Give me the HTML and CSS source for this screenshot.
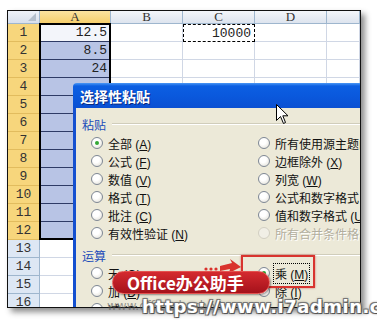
FILE: index.html
```html
<!DOCTYPE html>
<html>
<head>
    <title>选择性粘贴</title>
    <meta charset="utf-8" />
    <link rel="stylesheet" href="styles.css">
</head>
<body>
    <div class="page">
        <div class="shot">
            <!-- worksheet -->
            <div class="sheet">
                <div class="corner"><span class="tri"></span></div>
                <div class="ch on">A</div><div class="ch">B</div><div class="ch">C</div><div class="ch">D</div><div class="ch"></div>

                <div class="rh y">1</div><div class="c a act">12.5</div><div class="c"></div><div class="c ants">10000</div><div class="c"></div><div class="c"></div>
                <div class="rh y">2</div><div class="c a">8.5</div><div class="c"></div><div class="c"></div><div class="c"></div><div class="c"></div>
                <div class="rh y">3</div><div class="c a">24</div><div class="c"></div><div class="c"></div><div class="c"></div><div class="c"></div>
                <div class="rh y">4</div><div class="c a"></div><div class="c"></div><div class="c"></div><div class="c"></div><div class="c"></div>
                <div class="rh y">5</div><div class="c a"></div><div class="c"></div><div class="c"></div><div class="c"></div><div class="c"></div>
                <div class="rh y">6</div><div class="c a"></div><div class="c"></div><div class="c"></div><div class="c"></div><div class="c"></div>
                <div class="rh y">7</div><div class="c a"></div><div class="c"></div><div class="c"></div><div class="c"></div><div class="c"></div>
                <div class="rh y">8</div><div class="c a"></div><div class="c"></div><div class="c"></div><div class="c"></div><div class="c"></div>
                <div class="rh y">9</div><div class="c a"></div><div class="c"></div><div class="c"></div><div class="c"></div><div class="c"></div>
                <div class="rh y">10</div><div class="c a"></div><div class="c"></div><div class="c"></div><div class="c"></div><div class="c"></div>
                <div class="rh y">11</div><div class="c a"></div><div class="c"></div><div class="c"></div><div class="c"></div><div class="c"></div>
                <div class="rh y">12</div><div class="c a"></div><div class="c"></div><div class="c"></div><div class="c"></div><div class="c"></div>
                <div class="rh">13</div><div class="c"></div><div class="c"></div><div class="c"></div><div class="c"></div><div class="c"></div>
                <div class="rh">14</div><div class="c"></div><div class="c"></div><div class="c"></div><div class="c"></div><div class="c"></div>
                <div class="rh">15</div><div class="c"></div><div class="c"></div><div class="c"></div><div class="c"></div><div class="c"></div>
                <div class="rh">16</div><div class="c"></div><div class="c"></div><div class="c"></div><div class="c"></div><div class="c"></div>
            </div>
            <div class="selbox"></div>

            <!-- paste special dialog -->
            <div class="dialog">
                <div class="title">选择性粘贴</div>
                <div class="body">
                    <div class="grp">粘贴</div>
                    <div class="opts">
                        <div class="opt"><span class="rb on"></span><span>全部 (<u>A</u>)</span></div>
                        <div class="opt"><span class="rb"></span><span>所有使用源主题的单元 (<u>H</u>)</span></div>
                        <div class="opt"><span class="rb"></span><span>公式 (<u>F</u>)</span></div>
                        <div class="opt"><span class="rb"></span><span>边框除外 (<u>X</u>)</span></div>
                        <div class="opt"><span class="rb"></span><span>数值 (<u>V</u>)</span></div>
                        <div class="opt"><span class="rb"></span><span>列宽 (<u>W</u>)</span></div>
                        <div class="opt"><span class="rb"></span><span>格式 (<u>T</u>)</span></div>
                        <div class="opt"><span class="rb"></span><span>公式和数字格式 (<u>R</u>)</span></div>
                        <div class="opt"><span class="rb"></span><span>批注 (<u>C</u>)</span></div>
                        <div class="opt"><span class="rb"></span><span>值和数字格式 (<u>U</u>)</span></div>
                        <div class="opt"><span class="rb"></span><span>有效性验证 (<u>N</u>)</span></div>
                        <div class="opt off"><span class="rb"></span><span>所有合并条件格式 (<u>G</u>)</span></div>
                    </div>
                    <div class="grp second">运算</div>
                    <div class="opts">
                        <div class="opt"><span class="rb"></span><span>无 (<u>O</u>)</span></div>
                        <div class="opt"><span class="rb on"></span><span class="focus">乘 (<u>M</u>)</span></div>
                        <div class="opt"><span class="rb"></span><span>加 (<u>D</u>)</span></div>
                        <div class="opt"><span class="rb"></span><span>除 (<u>I</u>)</span></div>
                        <div class="opt"><span class="rb"></span><span>减 (<u>S</u>)</span></div>
                    </div>
                </div>
            </div>

            <div class="redbox"></div>
            <svg class="pointer" width="40" height="20" viewBox="0 0 40 20">
                <circle cx="3" cy="12" r="1.6" fill="#d9322d" />
                <circle cx="8" cy="12" r="1.6" fill="#d9322d" />
                <circle cx="13" cy="12" r="1.6" fill="#d9322d" />
                <polygon points="17,9 29,6 27,2 38,10 26,16 27,12 17,14" fill="#d9322d" />
            </svg>
            <div class="badge">Office办公助手</div>
            <svg class="cursor" width="13" height="21" viewBox="0 0 13 21">
                <path d="M0.5 0.5 L0.5 16.5 L4.5 12.5 L7.5 19.5 L9.5 18.5 L6.8 11.8 L12 11.8 Z" fill="#fff" stroke="#000" stroke-width="1" />
            </svg>
        </div>
        <div class="ghost">www.officezhushou.com</div>
        <div class="watermark">https://www.i7admin.cc</div>
    </div>
</body>
</html>
```

FILE: styles.css
```css
body {
    margin: 0;
    background: #fff;
}
.page {
    position: relative;
    width: 377px;
    height: 321px;
    overflow: hidden;
}
.shot {
    position: relative;
    margin: 10px 0 0 7px;
    width: 352px;
    height: 296px;
    border: 1px solid #111;
    overflow: hidden;
    background: #fff;
    box-shadow: 4px 4px 6px rgba(0, 0, 0, 0.45);
}

/* worksheet */
.sheet {
    display: grid;
    grid-template-columns: 32px 71px 72px 72px 72px 33px;
    grid-template-rows: 13px;
    grid-auto-rows: 18px;
    font-family: "Liberation Mono", "DejaVu Sans Mono", monospace;
    font-size: 13px;
    color: #222;
}
.sheet > div {
    box-sizing: border-box;
}
.corner {
    position: relative;
    background: linear-gradient(#eef2f8, #d8e0ec);
    border-right: 1px solid #9eb6ce;
    border-bottom: 1px solid #9eb6ce;
}
.corner .tri {
    position: absolute;
    right: 3px;
    bottom: 2px;
    width: 0;
    height: 0;
    border-left: 8px solid transparent;
    border-bottom: 8px solid #b4bfcc;
}
.ch {
    background: linear-gradient(#f3f6fa, #dde4ee);
    border-right: 1px solid #9eb6ce;
    border-bottom: 1px solid #9eb6ce;
    text-align: center;
    line-height: 12px;
    font-family: "Liberation Serif", serif;
    font-size: 13px;
    color: #333;
}
.ch.on {
    background: linear-gradient(#fbe3a0, #f6cf6c);
    border-bottom-color: #c9a24a;
}
.rh {
    background: #dde7f4;
    border-right: 1px solid #9eb6ce;
    border-bottom: 1px solid #9eb6ce;
    text-align: center;
    line-height: 17px;
    color: #333;
}
.rh.y {
    background: #f7d67c;
    border-bottom-color: #e2bc5e;
    border-right-color: #c9a24a;
}
.c {
    border-right: 1px solid #d0d7e5;
    border-bottom: 1px solid #d0d7e5;
    text-align: right;
    padding-right: 3px;
    line-height: 17px;
}
.c.a {
    background: #b8c4e5;
    border-bottom-color: #2e3b66;
}
.c.a.act {
    background: #f3f5fa;
}
.c.ants {
    border: 1px dashed #000;
}
.selbox {
    position: absolute;
    left: 31px;
    top: 12px;
    width: 72px;
    height: 217px;
    border: 2px solid #000;
    box-sizing: border-box;
}

/* dialog */
.dialog {
    position: absolute;
    left: 65px;
    top: 72px;
    width: 310px;
    height: 240px;
    font-family: "Liberation Sans", "Noto Sans CJK SC", sans-serif;
    font-size: 12px;
    color: #111;
}
.title {
    height: 25px;
    box-sizing: border-box;
    padding: 3px 0 0 7px;
    line-height: 22px;
    background: linear-gradient(#4a97f5 0, #0c5fe2 3px, #0a58dc 55%, #0b50d2 100%);
    color: #fff;
    font-size: 14px;
    font-weight: bold;
    text-shadow: 1px 1px 0 #0a2b80;
    border-radius: 4px 0 0 0;
}
.body {
    height: 215px;
    background: #ece9d8;
    border-left: 3px solid #1450d0;
    padding: 9px 0 0 6px;
}
.grp {
    display: flex;
    align-items: center;
    gap: 6px;
    height: 14px;
    color: #1b4cba;
}
.grp::after {
    content: "";
    flex: 1;
    border-top: 1px solid #d0cdbb;
    border-bottom: 1px solid #fff;
}
.grp.second {
    margin-top: 6px;
}
.opts {
    display: grid;
    grid-template-columns: 167px 1fr;
    grid-auto-rows: 18px;
    margin: 3px 0 0 9px;
}
.grp.second + .opts {
    margin-top: 2px;
}
.opt {
    display: flex;
    align-items: center;
    gap: 5px;
    white-space: nowrap;
}
.opt u {
    text-underline-offset: 1px;
}
.rb {
    flex: none;
    width: 12px;
    height: 12px;
    box-sizing: border-box;
    border-radius: 50%;
    border: 1px solid #7e8794;
    background: radial-gradient(circle at 40% 35%, #fff 35%, #dedbd0 100%);
}
.rb.on::after {
    content: "";
    display: block;
    width: 4px;
    height: 4px;
    margin: 3px;
    border-radius: 50%;
    background: #33a835;
}
.opt.off {
    color: #b2ae9e;
    text-shadow: 1px 1px 0 #fff;
}
.opt.off .rb {
    border-color: #d2cfc2;
    background: #f1efe6;
}
.focus {
    outline: 1px dotted #000;
    outline-offset: 1px;
}

/* annotations over the screenshot */
.redbox {
    position: absolute;
    left: 233px;
    top: 244px;
    width: 74px;
    height: 33px;
    box-sizing: border-box;
    border: 2px solid #d8342f;
    box-shadow: 0 0 2px rgba(200, 30, 30, 0.6);
}
.pointer {
    position: absolute;
    left: 195px;
    top: 246px;
}
.badge {
    position: absolute;
    left: 104px;
    top: 260px;
    width: 158px;
    height: 23px;
    box-sizing: border-box;
    padding-left: 14px;
    border-radius: 12px;
    border: 1px solid #e4524f;
    background: linear-gradient(#d42a2f, #a5121b);
    box-shadow: 1px 1px 2px rgba(0, 0, 0, 0.4);
    color: #fff;
    font-family: "Noto Sans CJK SC", "Noto Sans", sans-serif;
    font-size: 17px;
    font-weight: bold;
    line-height: 21px;
    white-space: nowrap;
}
.cursor {
    position: absolute;
    left: 268px;
    top: 93px;
}
.ghost {
    position: absolute;
    left: 107px;
    top: 299px;
    font-family: "DejaVu Sans", sans-serif;
    font-size: 12px;
    color: rgba(90, 90, 90, 0.6);
    white-space: nowrap;
}
.watermark {
    position: absolute;
    left: 142px;
    top: 296px;
    font-family: "DejaVu Sans", sans-serif;
    font-size: 18px;
    font-weight: bold;
    letter-spacing: 0.5px;
    color: #fff;
    white-space: nowrap;
    text-shadow: 1px 1px 0 #555, -1px -1px 0 #777, 1px -1px 0 #777, -1px 1px 0 #777, 0 0 3px #333;
}
```
